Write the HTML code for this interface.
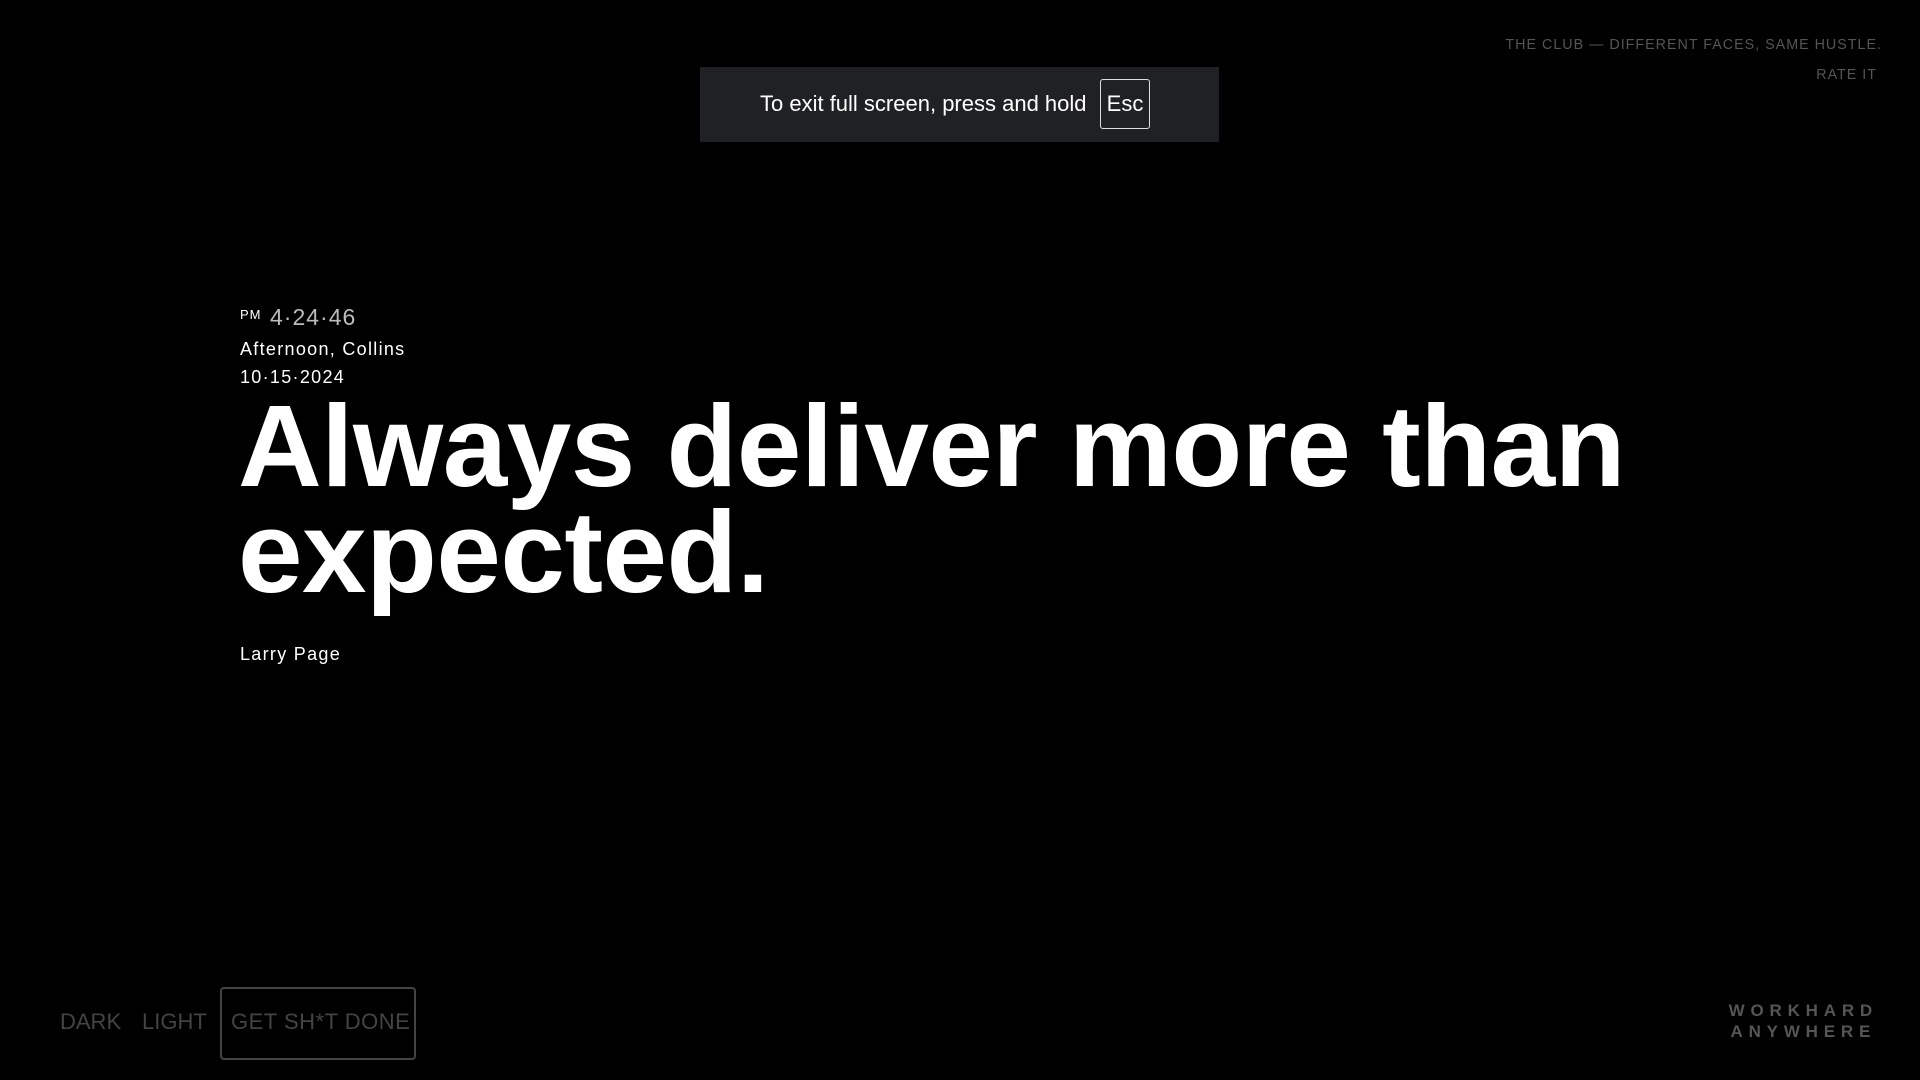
<!DOCTYPE html>
<html><head><meta charset="utf-8"><style>
html,body{margin:0;padding:0;background:#000;width:1920px;height:1080px;overflow:hidden;font-family:"Liberation Sans",Arial,sans-serif}
.abs{position:absolute}
.toast{left:700px;top:67px;width:519px;height:75px;background:#202124;color:#fff;font-size:22px;}
.toast span.t{position:absolute;left:60px;top:24px}
.esc{position:absolute;left:400px;top:12px;width:50px;height:50px;border:1px solid #ddd;border-radius:3px;box-sizing:border-box;text-align:center;line-height:48px;font-size:22px}
.tr{right:38px;color:#555;font-size:14.3px;letter-spacing:1px;text-align:right}
.small{color:#fff;font-size:18px;letter-spacing:1.3px}
h1{position:absolute;left:238px;top:393px;margin:0;color:#fff;font-size:116px;font-weight:bold;line-height:106px;letter-spacing:-0.5px}
.btm{color:#444;font-size:22px;top:1009px}
.box{left:220px;top:987px;width:196px;height:73px;border:2px solid #444;border-radius:4px;box-sizing:border-box}
.wh{right:42px;color:#555;font-size:17px;font-weight:bold;letter-spacing:5.8px;line-height:21px;text-align:center}
</style></head><body>
<div class="abs toast"><span class="t">To exit full screen, press and hold</span><div class="esc">Esc</div></div>
<div class="abs tr" style="top:37px">THE CLUB — DIFFERENT FACES, SAME HUSTLE.</div>
<div class="abs tr" style="top:67px;right:43px">RATE IT</div>
<div class="abs" style="left:240px;top:307px;color:#fff;font-size:13px;letter-spacing:1px">PM</div>
<div class="abs" style="left:270px;top:304px;color:#bbb;font-size:23px;letter-spacing:1px">4·24·46</div>
<div class="abs small" style="left:240px;top:339px">Afternoon, Collins</div>
<div class="abs small" style="left:240px;top:367px">10·15·2024</div>
<h1>Always deliver more than<br>expected.</h1>
<div class="abs small" style="left:240px;top:644px">Larry Page</div>
<div class="abs btm" style="left:60px">DARK</div>
<div class="abs btm" style="left:142px">LIGHT</div>
<div class="abs box"></div>
<div class="abs btm" style="left:231px;letter-spacing:0.5px">GET SH*T DONE</div>
<div class="abs wh" style="top:1000px">WORKHARD<br>ANYWHERE</div>
</body></html>
